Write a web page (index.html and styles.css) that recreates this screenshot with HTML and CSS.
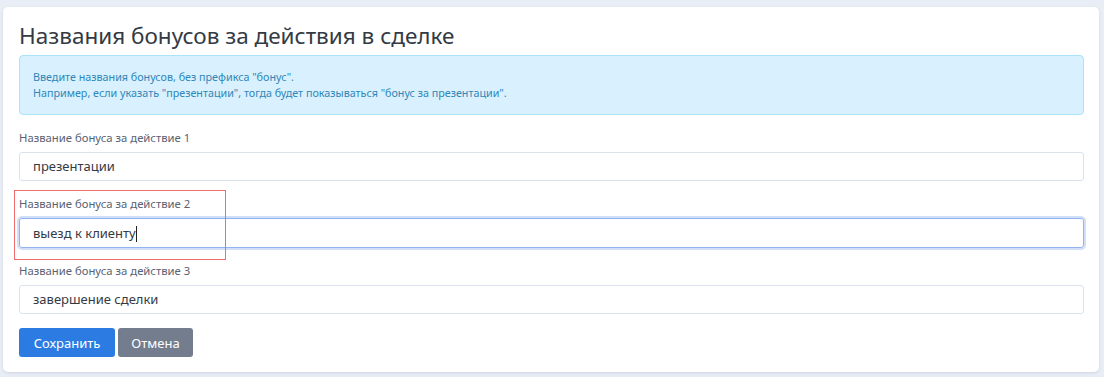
FILE: index.html
```html
<!DOCTYPE html>
<html lang="ru">
<head>
<meta charset="utf-8">
<link rel="stylesheet" href="styles.css">
</head>
<body>
<div class="card">
  <h1 class="title">Названия бонусов за действия в сделке</h1>
  <div class="alert">
    <div>Введите названия бонусов, без префикса "бонус".</div>
    <div>Например, если указать "презентации", тогда будет показываться "бонус за презентации".</div>
  </div>
  <div class="field">
    <label class="label">Название бонуса за действие 1</label>
    <div class="input">презентации</div>
  </div>
  <div class="field">
    <label class="label">Название бонуса за действие 2</label>
    <div class="input focus">выезд к клиенту<span class="caret"></span></div>
    <div class="highlight"></div>
  </div>
  <div class="field">
    <label class="label">Название бонуса за действие 3</label>
    <div class="input">завершение сделки</div>
  </div>
  <div class="actions">
    <button class="btn primary">Сохранить</button>
    <button class="btn secondary">Отмена</button>
  </div>
</div>
</body>
</html>
```
FILE: styles.css
```css
html, body { margin: 0; padding: 0; }
body {
  background: #e9edf5;
  font-family: "Noto Sans", "Open Sans", sans-serif;
  padding: 7px 5px 5px 3px;
}
.card {
  background: #fff;
  border-radius: 5px;
  box-shadow: 0 1px 3px rgba(60, 80, 120, 0.15);
  padding: 14px 15px 16px 16px;
  box-sizing: border-box;
  height: 365px;
}
.title {
  margin: 0 0 4px 0;
  font-size: 22.5px;
  font-weight: 400;
  color: #343a44;
  line-height: 30px;
}
.alert {
  background: #d9f1fe;
  border: 1px solid #abe3fb;
  border-radius: 4px;
  color: #2f86b8;
  font-size: 10.75px;
  line-height: 16px;
  padding: 13px 13px;
  margin-bottom: 15px;
}
.field { position: relative; margin-bottom: 15px; }
.label {
  display: block;
  font-size: 11.3px;
  color: #596273;
  line-height: 16px;
  margin-bottom: 6px;
}
.input {
  height: 29px;
  box-sizing: border-box;
  border: 1px solid #dbe2ee;
  border-radius: 3px;
  padding: 0 13px;
  font-size: 13px;
  line-height: 27px;
  color: #343a44;
}
.input.focus {
  height: 30px;
  line-height: 28px;
  border-color: #92b4ee;
  box-shadow: 0 0 0 2px #d1e0f8;
}
.caret {
  display: inline-block;
  width: 1px;
  height: 16px;
  background: #222;
  vertical-align: -4px;
}
.highlight {
  position: absolute;
  left: -5px;
  top: -6px;
  width: 210px;
  height: 68px;
  border: 1px solid #f26b6f;
  pointer-events: none;
}
.actions { display: flex; gap: 3px; margin-top: -1px; }
.btn {
  font-family: inherit;
  font-size: 13px;
  border: none;
  border-radius: 3px;
  color: #fff;
  height: 29px;
  padding: 0 13px;
}
.primary { background: #2b7be3; width: 96px; }
.secondary { background: #737d8e; width: 75px; }
```
